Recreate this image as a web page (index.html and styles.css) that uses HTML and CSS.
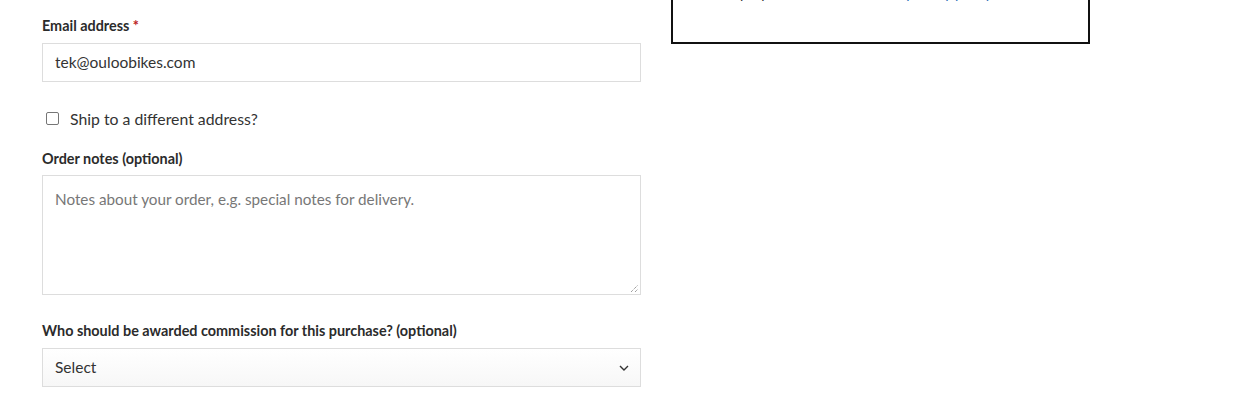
FILE: index.html
```html
<!DOCTYPE html>
<html>
<head>
<meta charset="utf-8">
<link rel="stylesheet" href="styles.css">
</head>
<body>
<div class="page">
  <div class="col-left">
    <div class="field">
      <label class="lbl" for="email">Email address <span class="req">*</span></label>
      <input id="email" class="txt" type="text" value="tek@ouloobikes.com">
    </div>
    <div class="ship">
      <span class="cb"></span>
      <span class="ship-text">Ship to a different address?</span>
    </div>
    <div class="field notes">
      <label class="lbl">Order notes (optional)</label>
      <div class="area">
        <span class="ph">Notes about your order, e.g. special notes for delivery.</span>
        <svg class="grip" width="9" height="9" viewBox="0 0 9 9"><path d="M1 8 L8 1 M5 8 L8 5" stroke="#777" stroke-width="1" stroke-dasharray="1 1"/></svg>
      </div>
    </div>
    <div class="field comm">
      <label class="lbl">Who should be awarded commission for this purchase? (optional)</label>
      <div class="sel">
        <span>Select</span>
        <svg class="chev" width="10" height="6" viewBox="0 0 10 6"><path d="M1 1 L5 5 L9 1" fill="none" stroke="#333" stroke-width="1.4"/></svg>
      </div>
    </div>
  </div>
  <div class="col-right">
    <div class="box">
      <p class="policy">purposes described in our <a class="plink">privacy policy</a>.</p>
    </div>
  </div>
</div>
</body>
</html>
```
FILE: styles.css
```css
* { box-sizing: border-box; }
body {
  margin: 0;
  background: #fff;
  font-family: Lato, "Noto Sans", sans-serif;
  color: #333;
}
.page {
  display: flex;
  gap: 30px;
  padding: 15px 0 0 42px;
}
.col-left { width: 599px; flex: none; }
.col-right { width: 419px; flex: none; }
.box {
  margin-top: -80px;
  height: 109px;
  border: 2px solid #111;
  overflow: hidden;
  position: relative;
}
.policy {
  margin: 0;
  position: absolute;
  left: 67px;
  top: 46px;
  font-size: 14.4px;
  line-height: 20px;
  white-space: nowrap;
  color: #333;
}
.plink { color: #2a6fb8; }
.field { display: flex; flex-direction: column; }
.lbl {
  font-size: 14.4px;
  font-weight: 700;
  line-height: 22px;
  color: #2b2b2b;
  margin-bottom: 6px;
}
.req { color: #b22; font-weight: 700; }
.txt {
  height: 39px;
  width: 599px;
  border: 1px solid #ddd;
  padding: 0 12px 2px;
  font-family: Lato, "Noto Sans", sans-serif;
  font-size: 15.5px;
  color: #333;
  outline: none;
  background: #fff;
}
.ship {
  display: flex;
  align-items: center;
  margin-top: 24px;
  height: 24px;
  padding-left: 4px;
}
.cb {
  width: 13px;
  height: 13px;
  border: 1px solid #767676;
  border-radius: 2px;
  margin-right: 11px;
}
.ship-text { font-size: 15.8px; color: #333; }
.notes { margin-top: 18px; }
.notes .lbl { margin-bottom: 5px; }
.area {
  position: relative;
  height: 120px;
  border: 1px solid #ddd;
  padding: 12px 12px;
}
.ph { font-size: 15.25px; color: #777; line-height: 22px; }
.grip { position: absolute; right: 1px; bottom: 1px; }
.comm { margin-top: 25px; }
.comm .lbl { margin-bottom: 6px; }
.sel {
  height: 39px;
  border: 1px solid #ddd;
  background: linear-gradient(#fff, #f7f7f7);
  display: flex;
  align-items: center;
  justify-content: space-between;
  padding: 0 10px 2px 12px;
  font-size: 15.5px;
  color: #333;
}
.chev { margin-right: 1px; margin-top: 2px; }
```
